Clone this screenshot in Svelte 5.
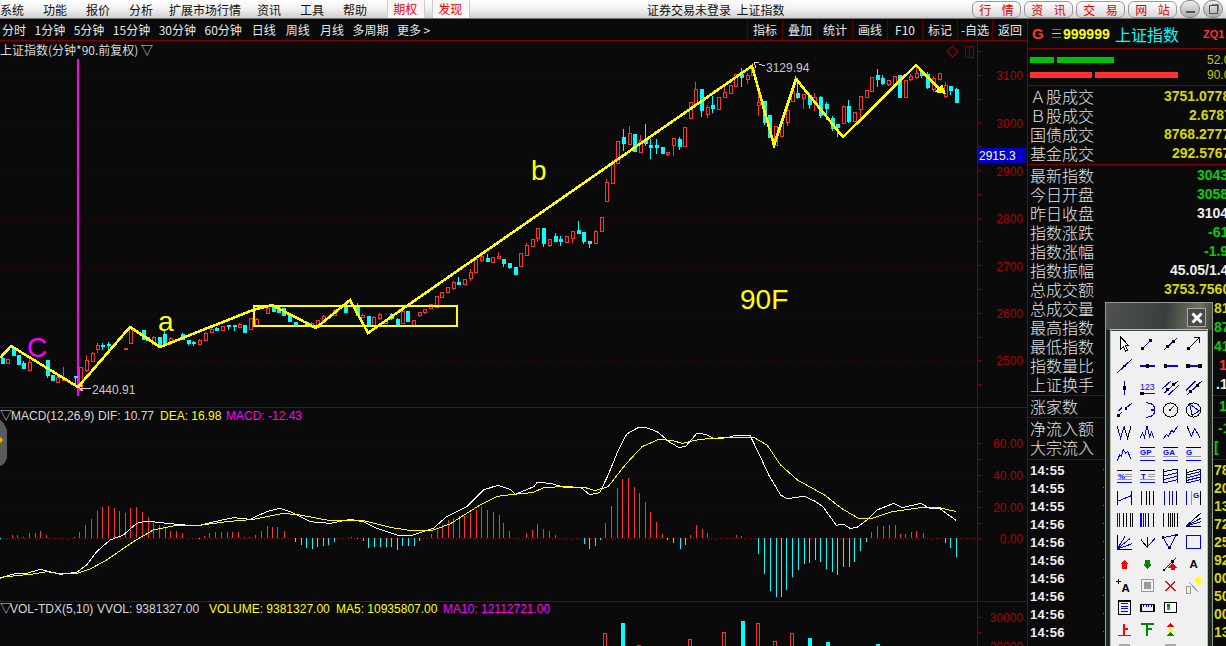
<script lang="ts">
  const menu = ["系统", "功能", "报价", "分析", "扩展市场行情", "资讯", "工具", "帮助"];
  const periods = ["分时", "1分钟", "5分钟", "15分钟", "30分钟", "60分钟", "日线", "周线", "月线", "多周期", "更多 >"];
  const tools = ["指标", "叠加", "统计", "画线", "F10", "标记", "-自选", "返回"];
  const links = ["行 情", "资 讯", "交 易", "网 站"];

  // [x, high, bodyTop, bodyBottom, low], screen pixels
  const redCandles = [
    [7,359,359,363,364],[29,358,362,370,371],[57,376,377,382,382],[63,367,378,380,380],
    [80,367,367,390,390],[86,355,360,370,372],[92,352,353,361,362],[97,343,345,349,353],[125,348,348,349,350],
    [130,326,328,343,343],[153,336,337,344,345],[170,337,338,343,345],[199,339,340,344,345],[205,332,333,340,341],
    [211,328,329,332,333],[222,326,326,330,331],[239,323,324,327,328],[250,318,318,329,329],[256,318,319,325,326],
    [267,306,308,313,314],[311,322,323,326,328],[317,320,320,327,328],[323,315,316,320,322],[334,309,310,315,316],
    [362,314,315,317,318],[373,316,317,326,327],[379,313,314,318,320],[385,320,320,323,324],[402,310,311,323,324],
    [413,320,320,325,325],[419,312,312,315,317],[424,309,309,312,314],[430,304,304,308,308],[436,296,296,307,307],[441,292,292,297,297],
    [447,287,287,292,292],[453,281,282,288,290],[464,279,279,284,284],[470,269,272,278,281],[475,259,259,272,272],[481,256,256,260,262],
    [492,257,257,262,262],[498,252,256,258,258],[520,253,253,266,266],[526,243,245,255,255],[532,239,239,246,246],[537,228,228,238,242],
    [549,239,239,245,247],[566,236,236,242,242],[572,231,231,238,243],[595,230,231,243,243],[601,217,217,231,231],[606,179,182,201,201],
    [612,160,163,183,183],[617,141,141,163,163],[629,126,133,144,144],[640,135,140,152,152],[667,152,152,154,156],[673,138,138,145,156],
    [684,127,127,146,146],[690,102,102,118,119],[695,82,89,103,103],[707,105,107,114,118],[718,97,97,109,109],[724,87,92,97,98],
    [730,85,85,93,93],[735,74,74,86,86],[747,73,75,79,84],[752,63,68,75,75],[758,93,102,105,116],[775,126,126,145,145],[781,122,122,136,136],
    [787,108,110,122,126],[792,91,91,101,101],[803,94,94,98,109],[814,93,97,102,111],[843,106,106,123,123],[854,112,112,121,121],
    [860,96,96,109,121],[866,90,90,97,97],[871,77,77,91,91],[888,80,80,84,86],[894,76,76,84,84],[905,80,80,97,97],[910,74,76,79,81],
    [916,67,73,77,79],[933,76,78,89,92],[939,73,73,79,79],[945,82,85,96,98]
  ];
  const cyanCandles = [
    [2,356,358,363,364],[13,346,348,355,356],[18,355,355,364,364],[23,361,363,368,369],[47,360,360,375,378],[52,375,375,380,381],
    [75,376,376,377,385],[102,343,345,346,350],[108,342,344,345,350],[143,330,330,339,340],[147,337,337,340,341],
    [159,337,337,344,345],[164,331,334,345,345],[182,333,334,339,340],[188,340,340,343,345],[193,341,342,343,346],
    [216,327,328,330,331],[228,325,325,326,330],[234,325,325,326,331],[244,325,325,332,333],[273,306,307,311,312],[278,306,308,312,313],
    [283,308,308,315,316],[289,315,315,321,322],[295,322,322,324,326],[306,321,322,325,326],[345,306,307,312,313],[357,303,305,315,316],
    [368,316,316,326,327],[391,313,314,318,320],[397,318,319,324,325],[407,311,311,321,321],[458,277,282,284,285],[487,254,258,261,262],
    [503,259,259,263,267],[509,263,263,267,269],[515,267,267,274,275],[543,228,228,243,247],[555,233,236,241,242],[560,236,239,241,246],
    [578,221,230,233,233],[583,232,232,241,244],[589,241,241,243,248],[623,129,137,143,151],[634,134,134,151,151],[645,124,139,143,146],
    [650,139,145,147,159],[656,139,145,147,154],[662,147,147,153,154],[679,137,139,146,150],[701,89,89,110,117],[712,96,105,108,113],
    [741,68,74,77,87],[764,101,101,122,125],[769,115,115,137,137],[797,78,93,97,99],[809,93,95,104,109],[820,96,97,115,118],
    [826,102,104,108,120],[832,116,118,128,131],[837,124,124,127,137],[848,100,106,121,123],[877,69,75,79,87],[882,75,78,83,85],
    [899,75,75,97,97],[921,70,72,75,78],[927,72,74,87,89],[950,86,86,90,95],[956,88,89,102,103]
  ];

  const priceLevels = [[3100,75],[3000,123],[2900,171],[2800,218],[2700,266],[2600,313],[2500,360]];
  const priceTicks = Array.from({ length: 15 }, (_, i) => 51 + i * 23.8);

  const zigzag = [[0,358],[11,346],[47,368],[78,387],[130,327],[160,347],[253,310],[272,305],[316,328],[350,300],[368,333],[752,66],[774,145],[796,79],[843,137],[916,65],[943,93]];
  const line = (pts: number[][]) => pts.map((p) => p.join(",")).join(" ");

  // MACD series, read off in two stretches of the chart
  const stitch = (a: number[][], b: number[][]) =>
    line([...a.map(([x, y]) => [x / 3, 400 + y / 3]), ...b.map(([x, y]) => [500 + x / 2.958, 400 + y / 3])]);

  const dif = stitch(
    [[0,535],[30,525],[50,520],[75,522],[120,508],[150,515],[180,523],[230,517],[260,495],[290,455],[330,420],[370,405],[410,370],[440,363],[500,370],[590,378],[630,368],[700,353],[750,358],[800,335],[840,325],[870,335],[930,365],[990,370],[1050,358],[1090,365],[1130,385],[1190,405],[1240,405],[1300,385],[1340,350],[1400,320],[1450,270],[1490,257]],
    [[0,258],[30,268],[45,283],[100,260],[110,247],[150,250],[190,262],[240,263],[265,284],[295,278],[320,225],[350,150],[375,102],[410,82],[430,82],[465,95],[500,125],[530,143],[550,138],[582,100],[610,103],[630,115],[680,112],[695,105],[740,107],[770,170],[795,225],[830,285],[850,296],[900,289],[930,303],[955,320],[995,376],[1015,372],[1035,385],[1055,383],[1085,360],[1115,330],[1165,310],[1190,323],[1245,310],[1270,325],[1300,325],[1350,362]]
  );
  const dea = stitch(
    [[0,532],[100,522],[140,515],[180,521],[230,520],[270,507],[320,480],[400,425],[460,390],[520,378],[590,377],[680,365],[760,358],[850,340],[900,345],[980,360],[1090,362],[1170,382],[1240,393],[1300,390],[1350,372],[1440,315],[1490,290]],
    [[0,288],[40,283],[95,278],[130,263],[180,260],[250,262],[280,272],[320,260],[370,195],[420,140],[470,118],[510,122],[540,130],[590,118],[680,113],[750,112],[790,135],[830,195],[880,240],[960,285],[1010,325],[1060,355],[1100,355],[1160,335],[1250,322],[1300,323],[1350,335]]
  );

  // [x, height], positive goes up from the zero line
  const macdLeft = [[0,-3],[36,10],[52,10],[70,3],[88,14],[104,16],[121,20],[139,8],[172,-1],[190,-1],[223,3],[238,18],[256,38],[273,58],[290,80],[307,93],[324,95],[341,90],[358,80],[375,75],[391,90],[408,93],[426,77],[443,62],[460,52],[478,38],[494,30],[511,20],[528,20],[545,15],[580,-1],[597,-4],[613,5],[628,14],[646,17],[664,19],[680,17],[697,17],[715,17],[731,4],[748,3],[766,9],[783,20],[800,35],[817,32],[832,32],[851,20],[885,-13],[902,-22],[919,-30],[935,-32],[952,-28],[970,-24],[985,-21],[1003,-12],[1053,2],[1070,-2],[1088,-8],[1105,-29],[1122,-28],[1140,-28],[1157,-28],[1173,-27],[1190,-35],[1207,-25],[1224,-23],[1241,-23],[1258,-10],[1292,12],[1310,25],[1326,40],[1343,55],[1360,60],[1376,65],[1392,65],[1410,75],[1427,85],[1444,92],[1462,85],[1480,78],[1496,70]];
  const macdRight = [[10,45],[27,22],[60,1],[78,15],[96,25],[110,42],[128,28],[146,22],[163,10],[180,1],[247,-17],[262,-32],[280,-25],[297,-5],[312,45],[329,97],[347,150],[362,178],[380,180],[395,153],[412,135],[430,108],[445,78],[462,48],[480,12],[495,-7],[513,-14],[531,-32],[546,-20],[563,10],[581,38],[597,27],[613,15],[682,1],[697,9],[714,6],[747,-1],[764,-47],[782,-107],[798,-160],[815,-178],[830,-178],[847,-157],[865,-118],[881,-95],[898,-77],[915,-75],[931,-65],[948,-72],[965,-92],[981,-103],[998,-112],[1016,-88],[1032,-88],[1048,-73],[1066,-40],[1082,-13],[1098,18],[1116,36],[1132,36],[1150,40],[1167,39],[1182,12],[1199,12],[1215,18],[1232,21],[1250,15],[1282,-1],[1315,-16],[1332,-31],[1350,-58]];
  const macdBars = [
    ...macdLeft.map(([x, h]) => [Math.round(x / 3), h / 3]),
    ...macdRight.map(([x, h]) => [Math.round(500 + x / 2.958), h / 3])
  ];
  const macdGrid = [[60,443],[40,475],[20,507]];

  // [x, top, cyan?]
  const volBars: [number, number, boolean][] = [[605,633,false],[622,623,true],[639,645,false],[690,639,false],[724,632,false],[742,621,true],[758,623,false],[775,641,false],[792,633,false],[809,638,true],[827,642,true],[877,644,true]];

  // side panel, "at" is where the value starts inside the row
  const turnover = [
    { name: "Ａ股成交", value: "3751.0778", at: 136, color: "yellow" },
    { name: "Ｂ股成交", value: "2.6787", at: 161, color: "yellow" },
    { name: "国债成交", value: "8768.2777", at: 136, color: "yellow" },
    { name: "基金成交", value: "292.5767", at: 144, color: "yellow" }
  ];
  const index = [
    { name: "最新指数", value: "3043.38", at: 169, color: "green" },
    { name: "今日开盘", value: "3058.15", at: 169, color: "green" },
    { name: "昨日收盘", value: "3104.07", at: 169, color: "white" },
    { name: "指数涨跌", value: "-61.29", at: 180, color: "green" },
    { name: "指数涨幅", value: "-1.97%", at: 176, color: "green" },
    { name: "指数振幅", value: "45.05/1.45%", at: 142, color: "white" },
    { name: "总成交额", value: "3753.7560", at: 136, color: "yellow" },
    { name: "总成交量", value: "81", at: 186, color: "yellow" },
    { name: "最高指数", value: "87", at: 186, color: "green" },
    { name: "最低指数", value: "41", at: 186, color: "green" },
    { name: "指数量比", value: "1", at: 191, color: "red" },
    { name: "上证换手", value: ".1", at: 188, color: "white" }
  ];
  const flows = [
    { name: "净流入额", value: "-1", at: 190, color: "green" },
    { name: "大宗流入", value: "[", at: 186, color: "green" }
  ];
  const ticks = [["14:55","78"],["14:55","20"],["14:55","13"],["14:56","72"],["14:56","25"],["14:56","92"],["14:56","00"],["14:56","50"],["14:56","00"],["14:56","13"]];

  // drawing tool palette
  const B = "#0000ff", K = "#000000", G = "#999999";
  const l = (a: number, b: number, c: number, d: number, s = B) => `<path d="M${a} ${b}L${c} ${d}" stroke="${s}"/>`;
  const sq = (x: number, y: number, r = 1.5) => `<rect x="${x - r}" y="${y - r}" width="${r * 2}" height="${r * 2}" fill="#000" stroke="none"/>`;
  const poly = (p: string, s = B) => `<polyline points="${p}" stroke="${s}"/>`;
  const label = (t: string, x = 3, y = 12, s = 9, c = B, w = 700) => `<text x="${x}" y="${y}" font-size="${s}" font-weight="${w}" font-family="Liberation Sans" fill="${c}" stroke="none">${t}</text>`;
  const gann = (t: string) => l(3, 4, 20, 4, K) + label(t) + l(3, 14, 20, 14, G) + l(3, 18, 20, 18);
  const textLines = (t: string) => l(3, 5, 20, 5, K) + label(t, 4, 14) + l(12, 9, 20, 9, G) + l(12, 12, 20, 12, G) + l(3, 15, 20, 15, G) + l(3, 18, 20, 18);
  const bars = (blue: number[], black: number[]) => blue.map((x) => l(x, 3, x, 19)).join("") + black.map((x) => l(x, 3, x, 19, K)).join("");

  const icons = [
    `<path d="M7 3v14l3-3 2.5 5 2.5-1-2.5-5h4z" stroke="#000" fill="#fff"/>`,
    l(6, 16, 17, 5) + sq(6, 16) + sq(15, 7),
    l(4, 18, 19, 4) + sq(8, 14) + sq(15, 8),
    l(6, 16, 18, 4, K) + `<path d="M12 4h6v6" stroke="#000"/>` + sq(6, 16),
    l(3, 19, 20, 3) + sq(11.5, 11),
    l(3, 11, 20, 11) + sq(11.5, 11, 2),
    l(5, 11, 20, 11) + sq(6, 11, 2),
    l(4, 11, 19, 11) + sq(5, 11, 2) + sq(19, 11, 2),
    l(11.5, 3, 11.5, 19) + sq(11.5, 11, 2),
    label("123", 3, 13, 10, B, 400) + l(5, 17, 20, 17) + sq(5, 17, 2),
    l(2, 12, 12, 3) + l(4, 17, 20, 3) + l(9, 19, 21, 8) + sq(8, 13) + sq(15, 7),
    l(3, 14, 14, 3) + l(4, 19, 21, 3) + sq(8, 15) + sq(16, 8),
    l(4, 18, 9, 13) + l(13, 9, 20, 3) + sq(5, 17) + sq(13, 9) + l(5, 12, 9, 8),
    `<path d="M10 3h2a8 8 0 0 1 0 16h-2" stroke="#00f"/>` + l(15, 11, 19, 11),
    `<circle cx="11.5" cy="11" r="8" stroke="#000"/>` + l(11, 11, 15, 7) + sq(11, 11),
    `<circle cx="11.5" cy="11" r="8" stroke="#000"/><path d="M7 4L18 12L10 17z" stroke="#00f"/>`,
    poly("3,4 7,18 11,5 15,18 19,4", K) + poly("5,11 7,18 9,11 11,5"),
    poly("3,18 6,12 8,17 11,4 14,16 16,11 19,18"),
    poly("3,19 7,14 9,16 13,9 15,11 20,4"),
    poly("4,4 9,16 13,7 19,18") + l(4, 4, 7, 11, K),
    poly("3,19 6,12 8,14 10,6 13,10 15,8 19,17") + l(10, 6, 13, 10, K),
    gann("GP"), gann("GA"), gann("G"),
    textLines("%"), textLines("T"),
    bars([], [4, 20]) + l(4, 6, 20, 3, K) + l(4, 11, 20, 7) + l(4, 15, 20, 11) + l(4, 19, 20, 15),
    bars([], [4, 20]) + l(4, 7, 20, 3, K) + l(4, 10, 20, 6) + l(4, 13, 20, 9) + l(4, 16, 20, 12) + l(4, 19, 20, 15),
    bars([], [3, 20]) + l(3, 15, 20, 8),
    bars([5], [10, 14, 18]),
    bars([5, 10, 14], [18]),
    bars([4], [19]) + l(9, 3, 9, 19, G) + label("G", 11, 11),
    bars([3, 6], [10, 14, 18, 21]),
    bars([3, 5, 7, 9], [13, 18]),
    bars([4], [9, 12, 14, 16, 20]),
    poly("3,18 20,3", K) + poly("3,18 20,9") + poly("3,18 20,13") + l(3, 18, 20, 18, K),
    `<path d="M3 3V19H20" stroke="#000"/>` + poly("3,19 12,5") + poly("3,19 18,7") + poly("3,19 20,13"),
    l(4, 8, 11, 17, K) + l(11, 17, 20, 7) + l(11, 5, 11, 17, K),
    `<path d="M3 6L18 3L10 18z" stroke="#00f"/>` + sq(3, 6) + sq(18, 3) + sq(10, 18),
    `<rect x="4" y="4" width="15" height="14" stroke="#00f"/>`,
    `<path d="M11.5 6L16 11.5H14V16.5H9V11.5H7z" fill="#f00" stroke="none"/>`,
    `<path d="M11.5 17L16 11.5H14V6H9V11.5H7z" fill="#080" stroke="none"/>`,
    l(3, 19, 18, 4) + sq(4, 18) + sq(14, 8) + `<path d="M14 10L19 15H17V18H12V15H9z" fill="#f00" stroke="none"/>`,
    label("A", 7, 16, 13, K),
    label("A", 8, 18, 13, K) + l(2, 6, 8, 6, K) + l(5, 3, 5, 9, K),
    `<rect x="5" y="4" width="13" height="13" stroke="#999" stroke-width="1.5"/><rect x="7.5" y="6.5" width="8" height="8" fill="#999" stroke="none"/>`,
    `<path d="M6 5L17 17M17 5L6 17" stroke="#f00" stroke-width="1.5"/>`,
    l(6, 6, 17, 18, G) + `<rect x="3" y="12" width="5" height="8" stroke="#999"/><circle cx="17" cy="5" r="3.5" fill="#ff0" stroke="none"/>`,
    `<rect x="5" y="3" width="13" height="15" stroke="#000" stroke-width="1.5"/>` + l(8, 6, 15, 6) + l(8, 9, 15, 9) + l(8, 12, 15, 12) + l(8, 15, 15, 15),
    `<rect x="4" y="7" width="15" height="8" stroke="#000" stroke-width="1.5"/><path d="M7 7v3M10 7v3M13 7v3M16 7v3" stroke="#00f"/>`,
    `<rect x="5" y="5" width="13" height="11" stroke="#000" fill="#fff"/><rect x="7" y="7" width="4" height="3" fill="#080" stroke="none"/><rect x="8" y="10" width="3" height="3" fill="#0aa" stroke="none"/><rect x="8" y="6" width="2" height="1" fill="#f00" stroke="none"/>`,
    ``,
    `<path d="M11 4V17M11 10H16M4 17H19" stroke="#f00" stroke-width="1.5"/>`,
    `<path d="M4 4H19M11 4V18M11 10H17" stroke="#080" stroke-width="1.5"/>`,
    `<path d="M11.5 3L16 8H7z" fill="#f00" stroke="none"/><path d="M11.5 8L16 13H7z" fill="#ff0" stroke="none"/><path d="M11.5 13L16 18H7z" fill="#080" stroke="none"/>`,
    ``,
    `<rect x="5" y="2" width="13" height="18" fill="#aaa" stroke="none"/>`,
    ``,
    `<rect x="5" y="2" width="13" height="18" fill="#aaa" stroke="none"/>`,
    ``
  ];
</script>

<div class="app">
  <header class="menubar">
    <nav class="menu">
      {#each menu as item}
        <span>{item}</span>
      {/each}
      <span class="hot">期权</span>
      <span class="hot">发现</span>
    </nav>
    <div class="title">证券交易未登录&nbsp; 上证指数</div>
    <div class="links">
      {#each links as item}
        <span class="pill">{item}</span>
      {/each}
      <span class="round"><i class="minus"></i></span>
      <span class="round"><i class="restore"></i></span>
    </div>
  </header>

  <div class="body">
    <section class="chart">
      <div class="toolbar">
        <div class="periods">
          {#each periods as p}
            <span>{p}</span>
          {/each}
        </div>
        <div class="tools">
          {#each tools as t}
            <span>{t}</span>
          {/each}
        </div>
      </div>

      <svg class="pane main" viewBox="0 41 1027 366">
        <text class="caption" x="0" y="55">上证指数(分钟*90.前复权) ▽</text>

        {#each priceLevels as [price, y]}
          <line class="grid" x1="0" x2="977" y1={y + 0.5} y2={y + 0.5} />
          <text class="axis" x="1023" y={y + 5}>{price}</text>
        {/each}
        {#each priceTicks as y}
          <line class="rule" x1="977" x2="982" y1={Math.round(y) + 0.5} y2={Math.round(y) + 0.5} />
        {/each}
        <line class="rule" x1="977.5" x2="977.5" y1="41" y2="407" />

        <line class="pivot" x1="78" x2="78" y1="59" y2="396" />

        {#each redCandles as [x, high, top, bottom, low]}
          <g class="up">
            <line x1={x + 0.5} x2={x + 0.5} y1={high} y2={top} />
            <line x1={x + 0.5} x2={x + 0.5} y1={bottom} y2={low} />
            <rect x={x - 1} y={top + 0.5} width="3" height={bottom - top} />
          </g>
        {/each}
        {#each cyanCandles as [x, high, top, bottom, low]}
          <g class="down">
            <line x1={x + 0.5} x2={x + 0.5} y1={high} y2={low} />
            <rect x={x - 1} y={top} width="4" height={bottom - top + 1} />
          </g>
        {/each}

        <rect class="box" x="254" y="306" width="203" height="20" />
        <polyline class="wave" points={line(zigzag)} />
        <path class="arrowhead" d="M946 94L934 92L942 84Z" />

        <g class="note">
          <path d="M79 388H91M79 388L83 385M79 388L83 391" />
          <path d="M754 62H759M754 62L756 68M759 64L765 66" />
        </g>
        <text class="value" x="92" y="394">2440.91</text>
        <text class="value" x="766" y="72">3129.94</text>

        <text class="mark magenta" x="27" y="357">C</text>
        <text class="mark yellow" x="158" y="331">a</text>
        <text class="mark yellow" x="531" y="180">b</text>
        <text class="mark yellow" x="740" y="309">90F</text>

        <path class="rule" d="M952.5 46L958 51.5L952.5 57L947 51.5Z" />
        <rect class="rule" x="965.5" y="46.5" width="8" height="11" />
        <path class="rule" d="M969.5 46.5V57.5" />

        <rect class="tag" x="978" y="148" width="48" height="15" />
        <text class="tag-text" x="979" y="160">2915.3</text>
      </svg>

      <svg class="pane macd" viewBox="0 407 1027 194">
        <line class="rule" x1="0" x2="1027" y1="407.5" y2="407.5" />
        <text class="legend" y="420">
          <tspan class="white" x="0">▽</tspan>
          <tspan class="white" x="11">MACD(12,26,9)</tspan>
          <tspan class="white" x="98">DIF: 10.77</tspan>
          <tspan class="yellow" x="160">DEA: 16.98</tspan>
          <tspan class="magenta" x="226">MACD: -12.43</tspan>
        </text>

        {#each macdGrid as [value, y]}
          <line class="grid" x1="0" x2="977" y1={y + 0.5} y2={y + 0.5} />
          <text class="axis" x="1023" y={y + 5}>{value}.00</text>
        {/each}
        <line class="grid zero" x1="0" x2="977" y1="538.5" y2="538.5" />
        <text class="axis" x="1023" y="543">0.00</text>
        {#each [443, 459, 475, 491, 507, 523, 538] as y}
          <line class="rule" x1="977" x2="982" y1={y + 0.5} y2={y + 0.5} />
        {/each}
        <line class="rule" x1="977.5" x2="977.5" y1="407" y2="601" />

        {#each macdBars as [x, h]}
          <line class={h > 0 ? "bar-up" : "bar-down"} x1={x + 0.5} x2={x + 0.5} y1="538" y2={538 - h} />
        {/each}

        <polyline class="dif" points={dif} />
        <polyline class="dea" points={dea} />

        <path class="handle" d="M0 420L4 424L7 430V458L4 464L0 466Z" />
        <path class="handle-arrow" d="M0 437L3 440L0 444Z" />
      </svg>

      <svg class="pane vol" viewBox="0 601 1027 45">
        <line class="rule" x1="0" x2="1027" y1="601.5" y2="601.5" />
        <text class="legend" y="613">
          <tspan class="white" x="0">▽</tspan>
          <tspan class="white" x="10">VOL-TDX(5,10)</tspan>
          <tspan class="white" x="97">VVOL: 9381327.00</tspan>
          <tspan class="yellow" x="209">VOLUME: 9381327.00</tspan>
          <tspan class="yellow" x="336">MA5: 10935807.00</tspan>
          <tspan class="magenta" x="443">MA10: 12112721.00</tspan>
        </text>
        {#each volBars as [x, top, down]}
          {#if down}
            <rect class="vol-down" x={x - 1} y={top} width="4" height={646 - top} />
          {:else}
            <rect class="vol-up" x={x - 1.5} y={top + 0.5} width="3" height={646 - top} />
          {/if}
        {/each}
        <text class="axis" x="1023" y="622">30000</text>
        <text class="axis" x="1023" y="651">20000</text>
        <line class="rule" x1="977" x2="982" y1="617.5" y2="617.5" />
        <line class="rule" x1="977" x2="982" y1="632.5" y2="632.5" />
        <line class="rule" x1="977.5" x2="977.5" y1="601" y2="646" />
      </svg>
    </section>

    <aside class="panel">
      <div class="head">
        <span class="g">G</span>
        <span class="stripes"><i></i><i></i><i></i></span>
        <span class="code">999999</span>
        <span class="name">上证指数</span>
        <span class="zq">ZQ1</span>
      </div>
      <div class="ratio">
        <div class="ratio-row">
          <i class="green" style="width: 24px"></i>
          <i class="green" style="width: 57px"></i>
          <b>52.0</b>
        </div>
        <div class="ratio-row">
          <i class="red" style="width: 62px"></i>
          <i class="red" style="width: 83px"></i>
          <b>90.0</b>
        </div>
      </div>

      <div class="group">
        {#each turnover as row}
          <div class="row">
            <span class="label">{row.name}</span>
            <span class="num {row.color}" style="left: {row.at}px">{row.value}</span>
          </div>
        {/each}
      </div>
      <div class="group">
        {#each index as row}
          <div class="row">
            <span class="label">{row.name}</span>
            <span class="num {row.color}" style="left: {row.at}px">{row.value}</span>
          </div>
        {/each}
      </div>
      <div class="group">
        <div class="row">
          <span class="label">涨家数</span>
          <span class="num green" style="left: 191px">10</span>
        </div>
      </div>
      <div class="group flows">
        {#each flows as row}
          <div class="row">
            <span class="label">{row.name}</span>
            <span class="num {row.color}" style="left: {row.at}px">{row.value}</span>
          </div>
        {/each}
      </div>
      <div class="trades">
        {#each ticks as [time, amount]}
          <div class="trade">
            <span class="time">{time}</span>
            <span class="speck"></span>
            <span class="amount">{amount}</span>
          </div>
        {/each}
      </div>
    </aside>
  </div>

  <div class="palette">
    <div class="palette-head">
      <span class="close">
        <svg viewBox="0 0 12 12" width="12" height="12"><path d="M1.5 1.5L10.5 10.5M10.5 1.5L1.5 10.5" /></svg>
      </span>
    </div>
    <div class="palette-grid">
      {#each icons as icon}
        <svg class="tool" viewBox="-1.5 -1.5 26 25" width="23" height="22">{@html icon}</svg>
      {/each}
    </div>
  </div>
</div>

<style>
  :global(body) {
    margin: 0;
    background: #0a0a0a;
  }

  .app {
    position: relative;
    width: 1226px;
    height: 646px;
    overflow: hidden;
    background: #0a0a0a;
    font-family: "Liberation Sans", "Noto Sans CJK SC", sans-serif;
    color: #e0e0e0;
  }

  .menubar {
    display: grid;
    grid-template-columns: 647px 1fr auto;
    align-items: center;
    height: 18px;
    background: linear-gradient(#ffffff, #f0f0f0 50%, #cfcfcf);
    border-bottom: 1px solid #777;
    font-size: 12px;
    color: #111;
    font-family: "Noto Sans CJK SC", sans-serif;
  }

  .menu {
    display: flex;
    align-items: center;
    height: 18px;
  }

  .menu span {
    margin-right: 19px;
    white-space: nowrap;
  }

  .menu span:nth-child(4),
  .menu span:nth-child(5) {
    margin-right: 16px;
  }

  .menu span:nth-child(8) {
    margin-right: 20px;
  }

  .menu .hot {
    height: 18px;
    line-height: 18px;
    margin-right: 7px;
    padding: 0 5px;
    color: #f00000;
    background: #f8f8f8;
    border-left: 1px solid #ccc;
    border-right: 1px solid #ccc;
    box-sizing: border-box;
    width: 38px;
  }

  .title {
    white-space: nowrap;
  }

  .links {
    display: flex;
    gap: 3px;
    margin-right: 3px;
    align-items: center;
  }

  .pill {
    width: 47px;
    height: 15px;
    line-height: 15px;
    text-align: center;
    border: 1px solid #999;
    border-radius: 6px;
    background: linear-gradient(#fff, #d8d8d8);
    color: #e00000;
    box-sizing: content-box;
    white-space: pre;
    word-spacing: 8px;
  }

  .round {
    display: flex;
    align-items: center;
    justify-content: center;
    width: 18px;
    height: 16px;
    border: 1px solid #888;
    border-radius: 9px;
    background: linear-gradient(#eee, #aaa);
  }

  .minus {
    width: 9px;
    height: 2px;
    margin-top: 5px;
    background: #555;
  }

  .restore {
    width: 7px;
    height: 7px;
    border: 1px solid #555;
    box-shadow: 2px -2px 0 -1px #777;
  }

  .body {
    display: flex;
    height: 627px;
  }

  .chart {
    width: 1027px;
    flex: none;
  }

  .toolbar {
    display: flex;
    justify-content: space-between;
    align-items: stretch;
    height: 22px;
    box-sizing: border-box;
    border-bottom: 1px solid #800000;
    font-size: 12px;
    font-family: "Noto Sans CJK SC", sans-serif;
    color: #e8e8e8;
  }

  .periods {
    display: flex;
    align-items: center;
    gap: 8.5px;
    padding-left: 2px;
    white-space: nowrap;
  }

  .periods span:nth-child(7),
  .periods span:nth-child(8),
  .periods span:nth-child(9) {
    margin-left: 1.5px;
  }

  .tools {
    display: flex;
  }

  .tools span {
    width: 35px;
    box-sizing: border-box;
    display: flex;
    align-items: center;
    justify-content: center;
    border-left: 1px solid #5a0000;
    white-space: nowrap;
  }

  .pane {
    display: block;
    width: 1027px;
    shape-rendering: crispEdges;
    font-family: "Liberation Sans", "Noto Sans CJK SC", sans-serif;
  }

  .pane.main { height: 366px; }
  .pane.macd { height: 194px; }
  .pane.vol { height: 45px; }

  .caption {
    font-size: 12px;
    fill: #d8d8d8;
    font-family: "Noto Sans CJK SC", sans-serif;
  }

  .grid {
    stroke: #640000;
    stroke-dasharray: 1 4;
  }

  .grid.zero {
    stroke: #a00000;
    stroke-dasharray: 1 2;
  }

  .rule {
    stroke: #800000;
    fill: none;
  }

  .axis {
    fill: #b00000;
    font-size: 12px;
    text-anchor: end;
  }

  .pivot {
    stroke: #ff00ff;
    stroke-width: 2;
  }

  .up line {
    stroke: #ff3232;
  }

  .up rect {
    fill: #0a0a0a;
    stroke: #ff3232;
  }

  .down line {
    stroke: #00ffff;
  }

  .down rect {
    fill: #00ffff;
  }

  .box {
    fill: none;
    stroke: #ffff00;
    stroke-width: 2;
  }

  .wave {
    fill: none;
    stroke: #ffff00;
    stroke-width: 2.6;
  }

  .arrowhead {
    fill: #ffff00;
  }

  .note {
    fill: none;
    stroke: #d8d8d8;
  }

  .value {
    font-size: 12px;
    fill: #c8c8c8;
  }

  .mark {
    font-size: 28px;
  }

  text.magenta,
  tspan.magenta {
    fill: #ff00ff;
  }

  text.yellow,
  tspan.yellow {
    fill: #ffff00;
  }

  tspan.white {
    fill: #d8d8d8;
  }

  .tag {
    fill: #0000c8;
  }

  .tag-text {
    font-size: 12px;
    fill: #ffffff;
  }

  .legend {
    font-size: 12px;
  }

  .bar-up {
    stroke: #ff3232;
  }

  .bar-down {
    stroke: #00ffff;
  }

  .dif {
    fill: none;
    stroke: #ffffff;
  }

  .dea {
    fill: none;
    stroke: #ffff00;
  }

  .handle {
    fill: #5a5a5a;
  }

  .handle-arrow {
    fill: #e8a000;
  }

  .vol-up {
    fill: #0a0a0a;
    stroke: #ff3232;
  }

  .vol-down {
    fill: #00ffff;
  }

  .panel {
    width: 199px;
    flex: none;
    box-sizing: border-box;
    border-left: 1px solid #800000;
    overflow: hidden;
  }

  .head {
    display: flex;
    align-items: center;
    height: 29px;
    border-bottom: 1px solid #800000;
    padding-left: 4px;
    white-space: nowrap;
  }

  .g {
    color: #ff3232;
    font-weight: 700;
    font-size: 15px;
    width: 20px;
  }

  .stripes {
    display: flex;
    flex-direction: column;
    gap: 3px;
    width: 9px;
    margin-right: 2px;
  }

  .stripes i {
    height: 1px;
    background: #ff3232;
  }

  .stripes i:nth-child(2) { background: #e0e000; }
  .stripes i:nth-child(3) { background: #00c000; }

  .code {
    color: #ffff00;
    font-weight: 700;
    font-size: 14px;
    width: 52px;
  }

  .name {
    color: #00ffff;
    font-size: 16px;
    font-family: "Noto Sans CJK SC", sans-serif;
    width: 88px;
  }

  .zq {
    color: #ff3232;
    font-weight: 700;
    font-size: 11px;
  }

  .ratio {
    box-sizing: content-box;
    border-bottom: 1px solid #800000;
    display: flex;
    flex-direction: column;
    gap: 9px;
    padding-top: 8px;
    height: 28px;
  }

  .ratio-row {
    position: relative;
    display: flex;
    gap: 3px;
    height: 6px;
    padding-left: 2px;
  }

  .ratio-row i.green { background: #00c000; }
  .ratio-row i.red { background: #ff3232; }

  .ratio-row b {
    position: absolute;
    left: 179px;
    top: -4px;
    font-weight: 400;
    font-size: 12px;
    color: #c8c800;
  }

  .group {
    border-bottom: 1px solid #800000;
    padding-bottom: 2px;
  }

  .group.flows {
    padding-bottom: 3px;
  }

  .row {
    position: relative;
    height: 18px;
    padding-top: 1px;
  }

  .label {
    display: inline-block;
    line-height: 18px;
    height: 18px;
    padding-left: 2px;
    font-size: 16px;
    font-family: "Noto Sans CJK SC", sans-serif;
    font-weight: 300;
    color: #e4e4e4;
    white-space: nowrap;
  }

  .num {
    position: absolute;
    top: 1px;
    line-height: 18px;
    font-size: 14px;
    font-weight: 700;
    white-space: nowrap;
  }

  .num.yellow { color: #d8d800; }
  .num.green { color: #00d000; }
  .num.white { color: #f0f0f0; }
  .num.red { color: #ff3232; }

  .trade {
    position: relative;
    height: 18px;
    line-height: 20px;
  }

  .time {
    padding-left: 2px;
    font-size: 13px;
    font-weight: 700;
    letter-spacing: 0.3px;
    color: #f0f0f0;
  }

  .speck {
    position: absolute;
    left: 75px;
    top: 9px;
    width: 1px;
    height: 1px;
    background: #00c000;
  }

  .amount {
    position: absolute;
    left: 186px;
    top: 0;
    font-size: 14px;
    font-weight: 700;
    color: #d8d800;
  }

  .palette {
    position: absolute;
    left: 1105px;
    top: 302px;
    width: 108px;
    height: 360px;
    box-sizing: border-box;
    padding: 0 5px;
    border: 1px solid #9a9a9a;
    border-bottom: none;
    background: linear-gradient(90deg, #1d2a1d, #3f6a45 45%, #1d2a1d);
  }

  .palette-head {
    display: flex;
    justify-content: flex-end;
    align-items: flex-start;
    height: 27px;
    margin: 0 -5px;
    padding: 5px 6px 0 0;
    box-sizing: border-box;
    background: linear-gradient(100deg, #4e5250, #3a3e3c 55%, #6d7560 85%, #3c3f3c);
  }

  .close {
    display: flex;
    align-items: center;
    justify-content: center;
    width: 19px;
    height: 19px;
    box-sizing: border-box;
    border: 1px solid #a8a8a8;
    background: #4a4a4a;
  }

  .close path {
    stroke: #ffffff;
    stroke-width: 3;
    fill: none;
  }

  .palette-grid {
    display: grid;
    grid-template-columns: repeat(4, 23px);
    grid-auto-rows: 22px;
    align-content: start;
    justify-content: center;
    height: 330px;
    padding-top: 2px;
    box-sizing: border-box;
    border-top: 1px solid #444;
    outline: 1px solid #bdbdbd;
    background: #f0f0f0;
  }

  .tool {
    fill: none;
    stroke-width: 1.15;
    shape-rendering: crispEdges;
  }
</style>
